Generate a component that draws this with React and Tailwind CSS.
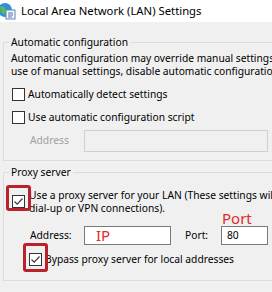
import React from "react";

function Check({ checked }) {
  return (
    <span className="w-[13px] h-[13px] border border-[#333333] bg-white flex items-center justify-center shrink-0">
      {checked && (
        <svg width="11" height="11" viewBox="0 0 11 11">
          <path d="M1.5 5.5 L4.2 8.2 L9.5 2.5" fill="none" stroke="#3a3a3a" strokeWidth="1.2" />
        </svg>
      )}
    </span>
  );
}

function Highlight({ className }) {
  return <span className={"absolute border-[3px] border-[#b9222a] rounded-[3px] " + className} />;
}

export default function App() {
  return (
    <div
      className="w-[272px] h-[292px] overflow-hidden bg-[#f0f0f0] text-[10.25px] text-black"
      style={{ fontFamily: '"Noto Sans", sans-serif' }}
    >
      {/* title bar */}
      <div className="h-[22px] bg-white flex items-center">
        <svg width="20" height="18" viewBox="0 0 20 18" className="ml-[-3px] shrink-0">
          <circle cx="8" cy="8" r="7" fill="#2f8fd8" />
          <path d="M3 5 Q6 3 8 6 T12 9 Q10 13 6 12 Q3 10 3 5Z" fill="#5cb85c" />
          <rect x="9" y="8" width="9" height="9" fill="#f4f8fc" stroke="#5b87b5" strokeWidth="1" />
          <path d="M11 11 H16 M11 13 H16 M11 15 H15" stroke="#4a78a8" strokeWidth="1" />
        </svg>
        <span className="ml-[4px] text-[11.3px] leading-none whitespace-nowrap">Local Area Network (LAN) Settings</span>
      </div>

      <div className="w-[340px] pl-[3px] pt-[12px]">
        <fieldset className="border border-[#dcdcdc] px-[5px] pb-[8px]">
          <legend className="px-[2px] leading-[16px]">Automatic configuration</legend>
          <div className="pl-[2px] leading-[13px] whitespace-nowrap mt-[2px]">
            <div>Automatic configuration may override manual settings.  To ensure the</div>
            <div>use of manual settings, disable automatic configuration.</div>
          </div>
          <div className="flex items-center gap-[3px] pl-[3px] mt-[10px] leading-[13px] whitespace-nowrap">
            <Check />
            <span>Automatically detect settings</span>
          </div>
          <div className="flex items-center gap-[3px] pl-[3px] mt-[10px] leading-[13px] whitespace-nowrap">
            <Check />
            <span>Use automatic configuration script</span>
          </div>
          <div className="flex items-center mt-[6px]">
            <span className="w-[75px] pl-[21px] text-[#a0a0a0]">Address</span>
            <span className="w-[184px] h-[22px] border border-[#cfcfcf] bg-[#f0f0f0]" />
          </div>
        </fieldset>

        <fieldset className="border border-[#dcdcdc] px-[5px] pb-[14px] mt-[3px]">
          <legend className="px-[2px] leading-[16px]">Proxy server</legend>
          <div className="flex items-start gap-[4px] pl-[3px] mt-[9px] leading-[13px] whitespace-nowrap">
            <span className="relative mt-[6px]">
              <Check checked />
              <Highlight className="left-[-6px] top-[-10px] w-[25px] h-[26px]" />
            </span>
            <div>
              <div>Use a proxy server for your LAN (These settings will not apply to</div>
              <div>dial-up or VPN connections).</div>
            </div>
          </div>
          <div className="flex items-end justify-start h-[11px] pl-[213px]">
            <span className="text-[15px] leading-[15px] text-[#e02b2b]">Port</span>
          </div>
          <div className="flex items-center">
            <span className="w-[75px] pl-[21px]">Address:</span>
            <span className="w-[87px] h-[19px] border border-[#7a7a7a] bg-white flex items-center pl-[11px] text-[15px] leading-none text-[#e02b2b]">IP</span>
            <span className="w-[50px] pl-[14px]">Port:</span>
            <span className="w-[47px] h-[19px] border border-[#7a7a7a] bg-white flex items-center pl-[5px]">80</span>
          </div>
          <div className="flex items-center gap-[3px] pl-[20px] mt-[8px] leading-[13px] whitespace-nowrap">
            <span className="relative">
              <Check checked />
              <Highlight className="left-[-6px] top-[-10px] w-[25px] h-[29px]" />
            </span>
            <span>Bypass proxy server for local addresses</span>
          </div>
        </fieldset>
      </div>
    </div>
  );
}
